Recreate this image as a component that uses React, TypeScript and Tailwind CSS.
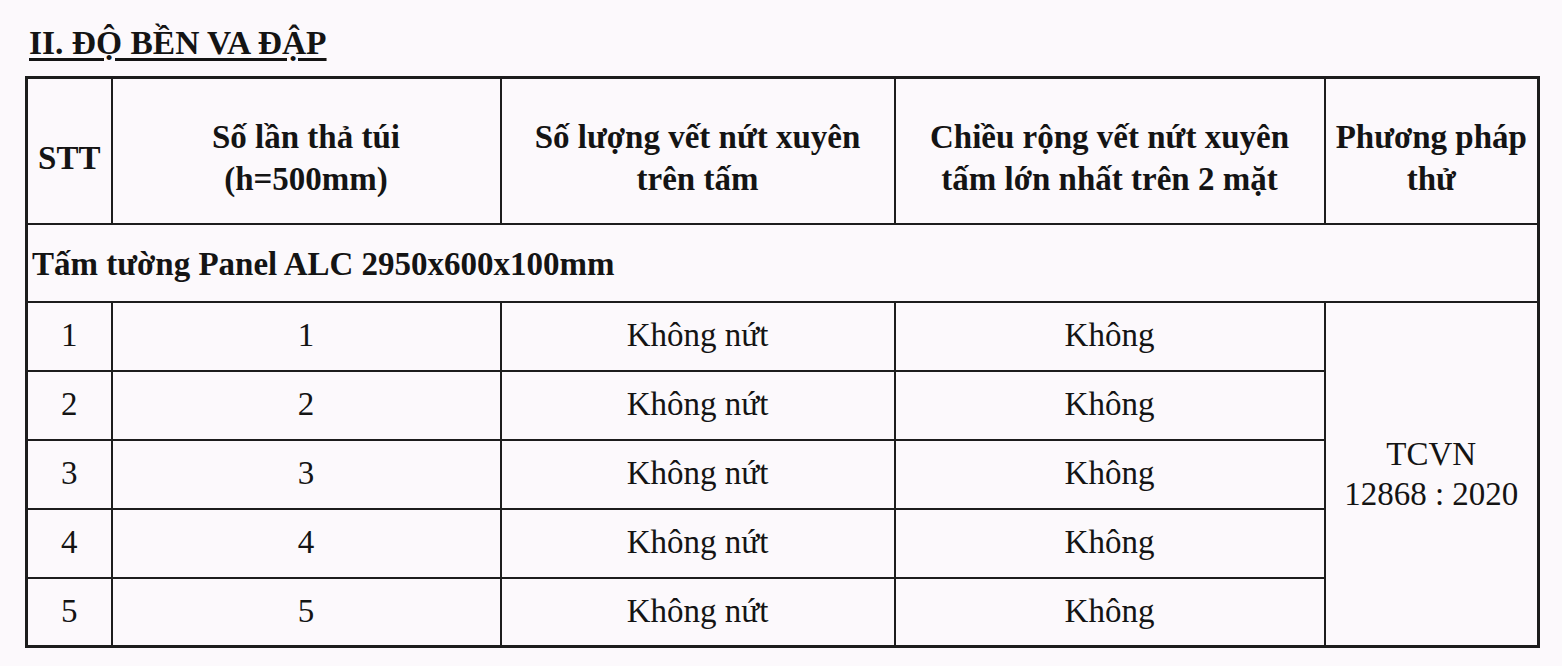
const rows = [1, 2, 3, 4, 5];

function HeadCell({ children }: { children: React.ReactNode }) {
  return (
    <th className="border-2 border-[#1d1d1d] px-2 pt-[14px] align-middle text-center font-bold leading-[42px]">
      {children}
    </th>
  );
}

export default function App() {
  return (
    <div className="w-full h-[666px] bg-[#fcf9fc] text-[#141414] font-['Liberation_Serif','Times_New_Roman',serif] pl-[25px] pt-[26px]">
      <div className="pl-[4px] text-[33.5px] leading-[33px] font-bold">
        <span className="underline decoration-[2.5px] underline-offset-[4px]">
          II. ĐỘ BỀN VA ĐẬP
        </span>
      </div>

      <table className="mt-[17px] w-[1512px] table-fixed border-collapse border-[3px] border-[#1d1d1d] text-[33px]">
        <colgroup>
          <col className="w-[85px]" />
          <col className="w-[389px]" />
          <col className="w-[394px]" />
          <col className="w-[430px]" />
          <col className="w-[214px]" />
        </colgroup>
        <thead>
          <tr className="h-[146px]">
            <HeadCell>STT</HeadCell>
            <HeadCell>
              Số lần thả túi
              <br />
              (h=500mm)
            </HeadCell>
            <HeadCell>
              Số lượng vết nứt xuyên
              <br />
              trên tấm
            </HeadCell>
            <HeadCell>
              Chiều rộng vết nứt xuyên
              <br />
              tấm lớn nhất trên 2 mặt
            </HeadCell>
            <HeadCell>
              Phương pháp
              <br />
              thử
            </HeadCell>
          </tr>
        </thead>
        <tbody>
          <tr className="h-[78px]">
            <td
              colSpan={5}
              className="border-2 border-[#1d1d1d] pl-[4px] pt-[4px] text-left font-bold align-middle"
            >
              Tấm tường Panel ALC 2950x600x100mm
            </td>
          </tr>
          {rows.map((n) => (
            <tr key={n} className="h-[69px]">
              <td className="border-2 border-[#1d1d1d] text-center align-middle">{n}</td>
              <td className="border-2 border-[#1d1d1d] text-center align-middle">{n}</td>
              <td className="border-2 border-[#1d1d1d] text-center align-middle">Không nứt</td>
              <td className="border-2 border-[#1d1d1d] text-center align-middle">Không</td>
              {n === 1 && (
                <td
                  rowSpan={5}
                  className="border-2 border-[#1d1d1d] text-center align-middle leading-[40px]"
                >
                  TCVN
                  <br />
                  12868 : 2020
                </td>
              )}
            </tr>
          ))}
        </tbody>
      </table>
    </div>
  );
}
